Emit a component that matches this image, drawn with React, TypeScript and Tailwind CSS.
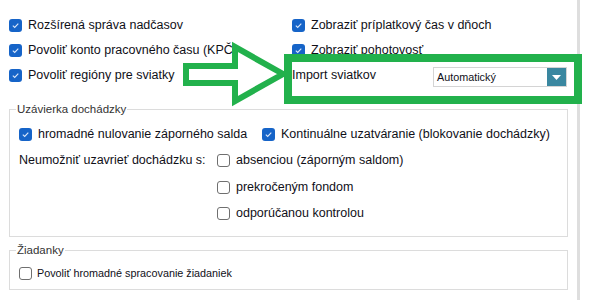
import React from 'react'

const FONT = { fontFamily: '"Liberation Sans", Arial, sans-serif' }

function Box({ checked }: { checked?: boolean }) {
  if (checked) {
    return (
      <span className="flex h-[13px] w-[13px] shrink-0 items-center justify-center rounded-[3px] bg-[#1664c8]">
        <svg width="9" height="9" viewBox="0 0 9 9">
          <path d="M1.8 4.6 L3.7 6.4 L7.3 2.6" fill="none" stroke="#dbe8fa" strokeWidth="1.1" />
        </svg>
      </span>
    )
  }
  return <span className="h-[13px] w-[13px] shrink-0 rounded-[3px] border border-[#6f6f6f] bg-white" />
}

function Check({ label, checked, small }: { label: string; checked?: boolean; small?: boolean }) {
  return (
    <div className={`flex items-center ${small ? 'gap-[5px] text-[10.8px]' : 'gap-[6px] text-[12.5px]'}`}>
      <Box checked={checked} />
      <span className="whitespace-nowrap">{label}</span>
    </div>
  )
}

export default function App() {
  return (
    <div className="relative flex h-[300px] w-[592px] overflow-hidden bg-white text-[#101018]" style={FONT}>
      <div className="w-[577px] shrink-0">
        {/* top options */}
        <div className="flex pt-[13px]">
          <div className="w-[292px] pl-[9px]">
            <div className="flex h-[25px] items-center"><Check checked label="Rozšírená správa nadčasov" /></div>
            <div className="flex h-[25px] items-center"><Check checked label="Povoliť konto pracovného času (KPČ)" /></div>
            <div className="flex h-[25px] items-center"><Check checked label="Povoliť regióny pre sviatky" /></div>
          </div>
          <div className="flex-1">
            <div className="flex h-[25px] items-center"><Check checked label="Zobraziť príplatkový čas v dňoch" /></div>
            <div className="flex h-[25px] items-center"><Check checked label="Zobraziť pohotovosť" /></div>
            <div className="flex h-[25px] items-center">
              <span className="w-[141px] text-[12.5px]">Import sviatkov</span>
              <div className="mt-[3px] flex h-[20px] w-[134px] items-center border border-[#d4d4d4]">
                <span className="flex-1 pl-[3px] text-[10.8px]">Automatický</span>
                <span className="flex h-[18px] w-[19px] items-center justify-center bg-[#3a87a0]">
                  <svg width="9" height="5" viewBox="0 0 9 5">
                    <path d="M0 0 H9 L4.5 5 Z" fill="#fff" />
                  </svg>
                </span>
              </div>
            </div>
          </div>
        </div>

        {/* Uzávierka dochádzky */}
        <fieldset className="ml-[9px] mt-[14px] w-[559px] border border-[#dcdcdc] px-[9px] pb-[10px]">
          <legend className="-ml-[3px] px-[1px] text-[11.5px] leading-[14px] text-[#333]">Uzávierka dochádzky</legend>
          <div className="pt-[5px]">
            <div className="flex h-[26px] items-center">
              <div className="w-[243px]"><Check checked label="hromadné nulovanie záporného salda" /></div>
              <Check checked label="Kontinuálne uzatváranie (blokovanie dochádzky)" />
            </div>
            <div className="flex">
              <div className="flex h-[27px] w-[198px] items-center text-[12.5px]">Neumožniť uzavrieť dochádzku s:</div>
              <div>
                <div className="flex h-[27px] items-center"><Check label="absenciou (záporným saldom)" /></div>
                <div className="flex h-[26px] items-center"><Check label="prekročeným fondom" /></div>
                <div className="flex h-[26px] items-center"><Check label="odporúčanou kontrolou" /></div>
              </div>
            </div>
          </div>
        </fieldset>

        {/* Žiadanky */}
        <fieldset className="ml-[9px] mt-[6px] w-[559px] border border-[#dcdcdc] px-[9px] pb-[3px]">
          <legend className="-ml-[3px] px-[1px] text-[11.5px] leading-[14px] text-[#333]">Žiadanky</legend>
          <div className="mt-[3px] flex h-[26px] items-center">
            <Check small label="Povoliť hromadné spracovanie žiadaniek" />
          </div>
        </fieldset>
      </div>

      {/* scrollbar edge */}
      <div className="w-[3px] shrink-0 bg-[#dedede]" />

      {/* annotation overlays */}
      <svg className="pointer-events-none absolute left-0 top-0" width="592" height="300">
        <polygon
          points="186,66 235,66 235,47 283,74 235,101 235,83 186,83"
          fill="none"
          stroke="#22b14c"
          strokeWidth="6"
        />
      </svg>
      <div className="pointer-events-none absolute left-[284px] top-[54px] h-[50px] w-[298px] border-[8px] border-[#22b14c]" />
    </div>
  )
}
